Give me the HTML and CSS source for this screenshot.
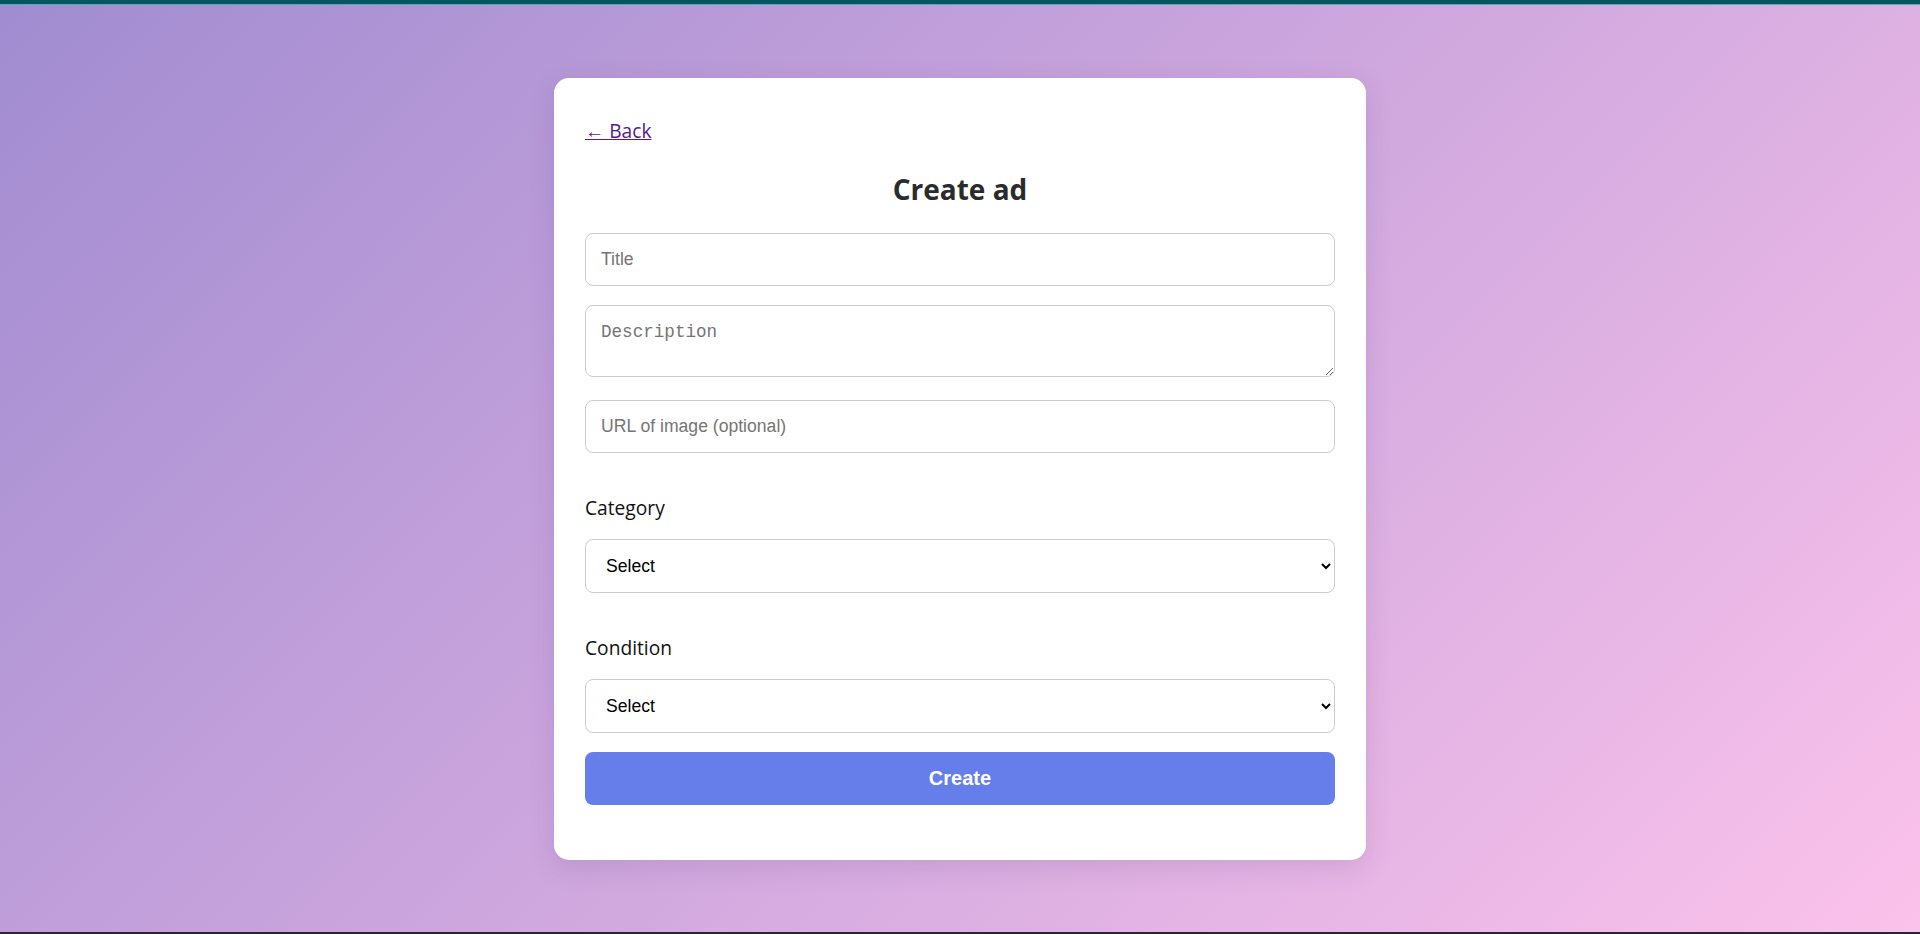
FILE: index.html
```html
<!DOCTYPE html>
<html lang="en">
<head>
<meta charset="utf-8">
<title>Create ad</title>
<link rel="stylesheet" href="styles.css">
</head>
<body>
<div class="topbar"></div>
<main class="page">
  <section class="card">
    <div class="back-row"><a class="back" href="#">← Back</a></div>
    <h1 class="title">Create ad</h1>
    <form class="form">
      <input class="field" type="text" placeholder="Title">
      <textarea class="field area" placeholder="Description"></textarea>
      <input class="field" type="text" placeholder="URL of image (optional)">
      <label class="label">Category</label>
      <select class="field select">
        <option>Select</option>
      </select>
      <label class="label">Condition</label>
      <select class="field select">
        <option>Select</option>
      </select>
      <button class="submit" type="button">Create</button>
    </form>
  </section>
</main>
<div class="bottombar"></div>
</body>
</html>
```

FILE: styles.css
```css
html, body {
  margin: 0;
  padding: 0;
  height: 100%;
}
body {
  display: flex;
  flex-direction: column;
  font-family: "Open Sans", "Noto Sans", sans-serif;
  overflow: hidden;
}
.topbar {
  height: 4px;
  background: #06565f;
  border-bottom: 1px solid #56a9b5;
  flex: none;
}
.bottombar {
  height: 2px;
  background: #2a252e;
  flex: none;
}
.page {
  flex: 1;
  display: flex;
  align-items: center;
  justify-content: center;
  background: linear-gradient(135deg, #a18cd1 0%, #fbc2eb 100%);
}
.card {
  width: 812px;
  box-sizing: border-box;
  padding: 31px;
  background: #fff;
  border-radius: 15px;
  box-shadow: 0 8px 28px rgba(80, 40, 110, 0.14);
}
.back-row {
  margin-top: 8px;
  font-size: 19.2px;
  line-height: 28px;
}
.back {
  color: #551a8b;
  text-decoration: underline;
}
.title {
  margin: 26px 0 0;
  text-align: center;
  font-size: 28px;
  line-height: 36px;
  font-weight: 700;
  color: #2b2b2b;
}
.form {
  display: flex;
  flex-direction: column;
  margin-top: 26px;
}
.field {
  display: block;
  box-sizing: border-box;
  width: 100%;
  height: 53px;
  margin: 0 0 19px;
  padding: 0 15px;
  border: 1px solid #cccccc;
  border-radius: 8px;
  background: #fff;
  font-family: "Liberation Sans", Arial, sans-serif;
  font-size: 17.6px;
  color: #000;
  outline: none;
}
.area {
  height: 72px;
  margin-bottom: 23px;
  padding: 16px 15px;
  font-family: "Liberation Mono", "Courier New", monospace;
  resize: vertical;
}
.select {
  height: 54px;
  padding-left: 16px;
}
.label {
  display: block;
  margin: 22px 0 17px;
  font-size: 19.2px;
  line-height: 28px;
  color: #111;
}
.submit {
  display: block;
  width: 100%;
  height: 53px;
  margin: 0 0 24px;
  border: none;
  border-radius: 8px;
  background: #667eea;
  color: #fff;
  font-family: "Liberation Sans", Arial, sans-serif;
  font-size: 20px;
  font-weight: 700;
  cursor: pointer;
}
```
